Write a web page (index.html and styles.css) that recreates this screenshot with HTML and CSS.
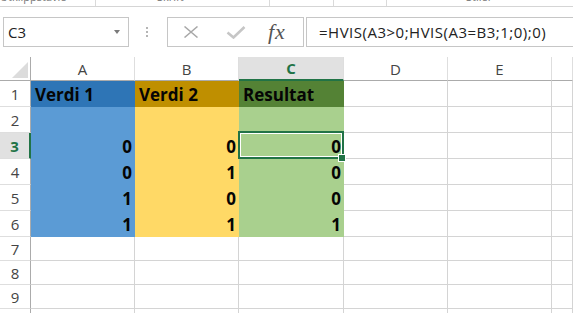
FILE: index.html
```html
<!DOCTYPE html>
<html lang="no">
<head>
  <meta charset="UTF-8" />
  <meta name="viewport" content="width=device-width, initial-scale=1.0" />
  <title>HVIS – regneark</title>
  <link rel="stylesheet" href="styles.css">
</head>
<body>
  <div class="ribbon">
    <div class="group g1"><span>Utklippstavle</span></div>
    <div class="group g2"><span>Skrift</span></div>
    <div class="group g3"></div>
    <div class="group g4"></div>
    <div class="group g5"><span>Stiler</span></div>
  </div>

  <div class="formula-bar">
    <div class="name-box">C3<span class="drop"></span></div>
    <div class="grip"><i></i><i></i><i></i></div>
    <div class="fx-buttons">
      <svg class="btn-cancel" width="16" height="12" viewBox="0 0 16 12">
        <path d="M1.5 0.5L14.5 11.5M14.5 0.5L1.5 11.5" stroke="#a8a8a8" stroke-width="1.5" fill="none" />
      </svg>
      <svg class="btn-enter" width="20" height="13" viewBox="0 0 20 13">
        <path d="M1.5 6.5L7.5 11.5L18.5 1" stroke="#c6c6c6" stroke-width="2.6" fill="none" />
      </svg>
      <span class="fx">fx</span>
    </div>
    <div class="formula">=HVIS(A3&gt;0;HVIS(A3=B3;1;0);0)</div>
  </div>

  <div class="sheet">
    <div class="corner"><span class="tri"></span></div>
    <div class="col-head">A</div>
    <div class="col-head">B</div>
    <div class="col-head active">C</div>
    <div class="col-head">D</div>
    <div class="col-head">E</div>
    <div class="col-head"></div>

    <div class="row-head">1</div>
    <div class="cell blue-dark">Verdi 1</div>
    <div class="cell gold-dark">Verdi 2</div>
    <div class="cell green-dark">Resultat</div>
    <div class="cell"></div>
    <div class="cell"></div>
    <div class="cell"></div>

    <div class="row-head">2</div>
    <div class="cell blue"></div>
    <div class="cell gold"></div>
    <div class="cell green"></div>
    <div class="cell"></div>
    <div class="cell"></div>
    <div class="cell"></div>

    <div class="row-head active">3</div>
    <div class="cell num blue">0</div>
    <div class="cell num gold">0</div>
    <div class="cell num green selected">0</div>
    <div class="cell"></div>
    <div class="cell"></div>
    <div class="cell"></div>

    <div class="row-head">4</div>
    <div class="cell num blue">0</div>
    <div class="cell num gold">1</div>
    <div class="cell num green">0</div>
    <div class="cell"></div>
    <div class="cell"></div>
    <div class="cell"></div>

    <div class="row-head">5</div>
    <div class="cell num blue">1</div>
    <div class="cell num gold">0</div>
    <div class="cell num green">0</div>
    <div class="cell"></div>
    <div class="cell"></div>
    <div class="cell"></div>

    <div class="row-head">6</div>
    <div class="cell num blue">1</div>
    <div class="cell num gold">1</div>
    <div class="cell num green">1</div>
    <div class="cell"></div>
    <div class="cell"></div>
    <div class="cell"></div>

    <div class="row-head">7</div>
    <div class="cell"></div>
    <div class="cell"></div>
    <div class="cell"></div>
    <div class="cell"></div>
    <div class="cell"></div>
    <div class="cell"></div>

    <div class="row-head">8</div>
    <div class="cell"></div>
    <div class="cell"></div>
    <div class="cell"></div>
    <div class="cell"></div>
    <div class="cell"></div>
    <div class="cell"></div>

    <div class="row-head">9</div>
    <div class="cell"></div>
    <div class="cell"></div>
    <div class="cell"></div>
    <div class="cell"></div>
    <div class="cell"></div>
    <div class="cell"></div>

    <!-- top sliver of row 10 -->
    <div class="row-head stub"></div>
    <div class="cell stub"></div>
    <div class="cell stub"></div>
    <div class="cell stub"></div>
    <div class="cell stub"></div>
    <div class="cell stub"></div>
    <div class="cell stub"></div>
  </div>
</body>
</html>
```

FILE: styles.css
```css
html, body {
  margin: 0;
  height: 100%;
  overflow: hidden;
}
body {
  font-family: "Open Sans", "Liberation Sans", sans-serif;
  background-color: #fff;
  color: #222;
  width: 573px;
}

/* ribbon group labels, cut off at the top */
.ribbon {
  display: flex;
  height: 6px;
  border-bottom: 1px solid #d5d5d5;
  overflow: hidden;
}
.group {
  flex: none;
  box-sizing: border-box;
  border-right: 1px solid #dadada;
}
.group span {
  display: block;
  margin-top: -9px;
  font-size: 11px;
  line-height: 12px;
  color: #777;
  white-space: nowrap;
}
.g1 { width: 96px; }
.g2 { width: 174px; padding-left: 61px; }
.g3 { width: 64px; }
.g4 { width: 53px; }
.g5 { flex: 1; border-right: none; padding-left: 79px; }

/* formula bar */
.formula-bar {
  display: flex;
  align-items: center;
  height: 30px;
  margin: 10px 0;
}
.name-box {
  box-sizing: border-box;
  display: flex;
  align-items: center;
  width: 126px;
  height: 30px;
  margin-left: 3px;
  padding-left: 4px;
  border: 1px solid #c6c6c6;
  font-size: 15px;
  color: #222;
}
.drop {
  margin-left: auto;
  margin-right: 8px;
  width: 0;
  height: 0;
  border-left: 3px solid transparent;
  border-right: 3px solid transparent;
  border-top: 4px solid #7a7a7a;
}
.grip {
  display: flex;
  flex-direction: column;
  gap: 2px;
  margin: 0 19px 0 17px;
}
.grip i {
  display: block;
  width: 2px;
  height: 2px;
  background-color: #b5b5b5;
}
.fx-buttons {
  box-sizing: border-box;
  display: flex;
  align-items: center;
  width: 137px;
  height: 30px;
  padding-left: 15px;
  border: 1px solid #c6c6c6;
}
.btn-enter {
  margin-left: 27px;
}
.fx {
  margin-left: 22px;
  font-family: "Liberation Serif", serif;
  font-style: italic;
  font-size: 22px;
  letter-spacing: 1px;
  color: #555;
  line-height: 1;
}
.formula {
  box-sizing: border-box;
  flex: 1;
  display: flex;
  align-items: center;
  height: 30px;
  margin-left: 2px;
  padding-left: 12px;
  border: 1px solid #c6c6c6;
  border-right: none;
  font-size: 15px;
  letter-spacing: 0.5px;
  color: #222;
  white-space: nowrap;
}

/* grid */
.sheet {
  display: grid;
  grid-template-columns: 31px 104px 104px 105px 104px 104px 1fr;
  grid-template-rows: 24px repeat(6, 26px) repeat(3, 24px) 4px;
}
.sheet > div {
  box-sizing: border-box;
  border-right: 1px solid #d4d4d4;
  border-bottom: 1px solid #d4d4d4;
}
.sheet > .stub {
  border-bottom: none;
}
.corner {
  display: flex;
  justify-content: flex-end;
  align-items: flex-end;
  padding: 0 2px 2px 0;
  border-right-color: #ababab !important;
  border-bottom-color: #ababab !important;
}
.tri {
  width: 16px;
  height: 16px;
  background-color: #dcdcdc;
  clip-path: polygon(100% 0, 100% 100%, 0 100%);
}
.col-head {
  display: flex;
  align-items: center;
  justify-content: center;
  font-size: 15px;
  color: #444;
  border-right-color: #dedede !important;
  border-bottom-color: #ababab !important;
}
.col-head.active,
.row-head.active {
  background-color: #e1e1e1;
  color: #217346;
  font-weight: bold;
}
.col-head.active {
  border-bottom: 2px solid #217346 !important;
}
.row-head {
  display: flex;
  align-items: center;
  justify-content: center;
  padding-top: 1px;
  font-size: 15px;
  color: #444;
  border-right-color: #ababab !important;
  border-bottom-color: #dedede !important;
}
.row-head.active {
  border-right: 2px solid #217346 !important;
}

.cell {
  display: flex;
  align-items: center;
  padding: 1px 2px 0 4px;
  font-family: "Open Sans", sans-serif;
  font-weight: bold;
  font-size: 17px;
  color: #050505;
  white-space: nowrap;
}
.num {
  justify-content: flex-end;
}

.blue-dark { background-color: #2e75b6; border-color: #2e75b6 !important; }
.blue { background-color: #5b9bd5; border-color: #5b9bd5 !important; }
.gold-dark { background-color: #bf8f00; border-color: #bf8f00 !important; }
.gold { background-color: #ffd966; border-color: #ffd966 !important; }
.green-dark { background-color: #548235; border-color: #548235 !important; }
.green { background-color: #a9d08e; border-color: #a9d08e !important; }

/* active cell frame and fill handle */
.selected {
  position: relative;
}
.selected::before {
  content: "";
  position: absolute;
  top: -2px;
  left: -1px;
  right: -1px;
  bottom: -1px;
  border: 2px solid #217346;
  box-shadow: inset 0 0 0 1px #fff;
  z-index: 1;
}
.selected::after {
  content: "";
  position: absolute;
  right: -2px;
  bottom: -3px;
  width: 6px;
  height: 6px;
  background-color: #217346;
  box-shadow: 0 0 0 1px #fff;
  z-index: 2;
}
```
